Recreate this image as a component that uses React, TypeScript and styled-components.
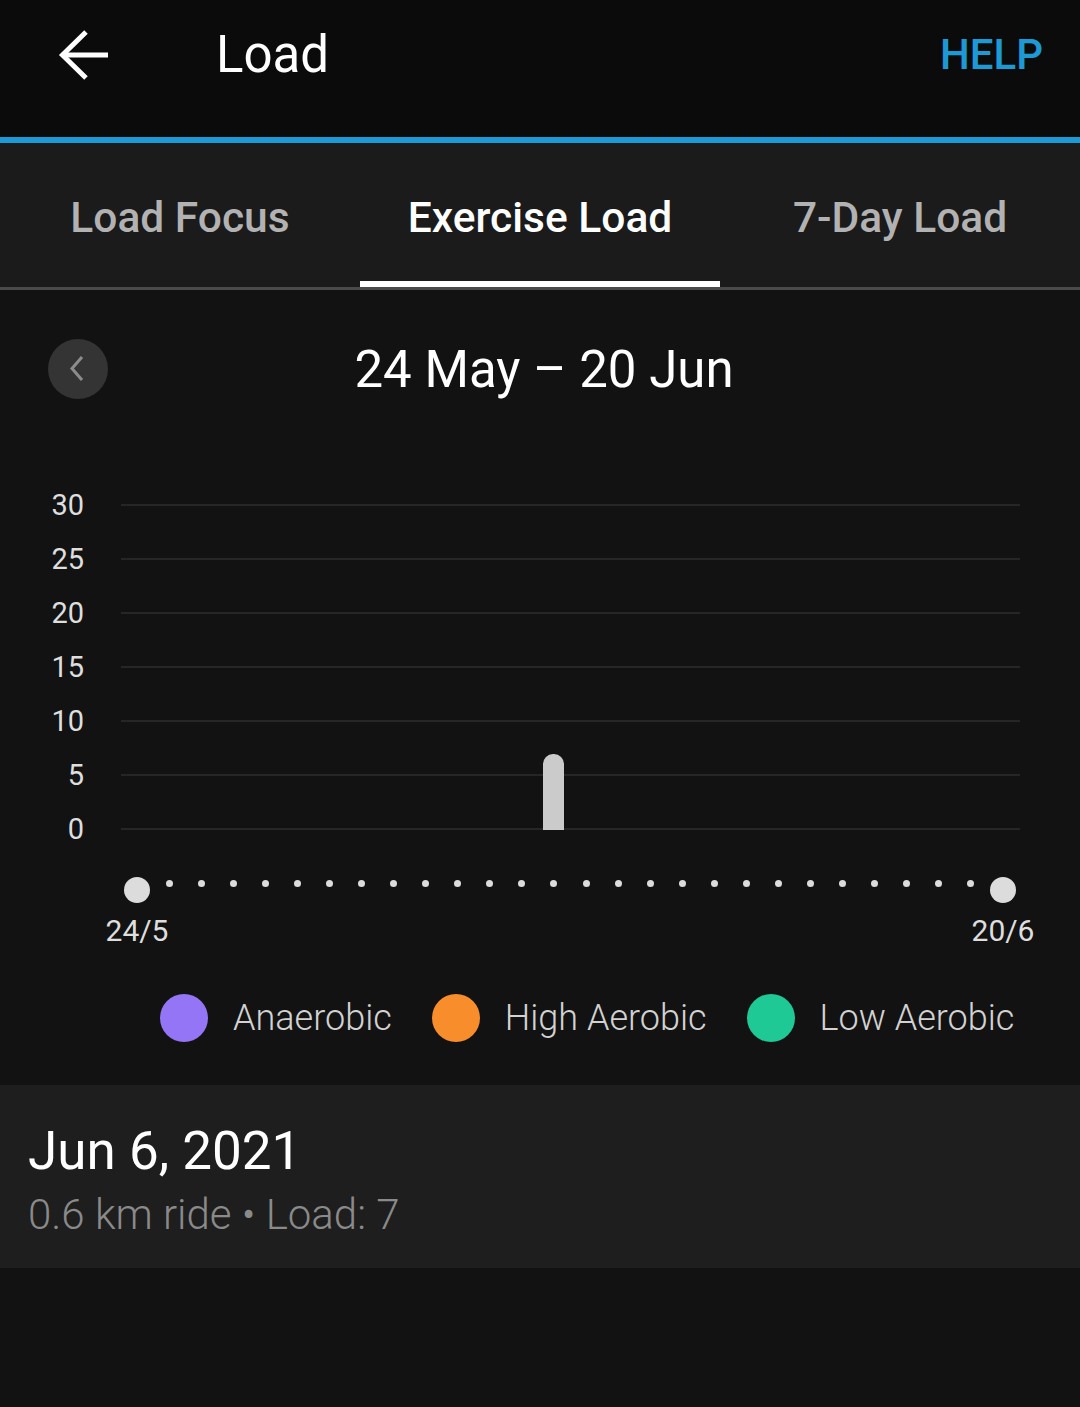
import styled, { createGlobalStyle } from "styled-components";

const GlobalStyle = createGlobalStyle`
  html, body {
    margin: 0;
    padding: 0;
    background: #121212;
  }
  body {
    font-family: Roboto, "Noto Sans", "Liberation Sans", sans-serif;
    -webkit-font-smoothing: antialiased;
  }
`;

const Page = styled.div`
  width: 1080px;
  min-height: 1407px;
  background: #121212;
  display: flex;
  flex-direction: column;
`;

const Header = styled.header`
  height: 143px;
  box-sizing: border-box;
  background: #0b0b0b;
  border-bottom: 6px solid #1d9ad6;
  display: flex;
  align-items: center;
  padding: 0 37px 28px 56px;
`;

const BackButton = styled.button`
  background: none;
  border: 0;
  padding: 0;
  width: 56px;
  height: 56px;
  display: flex;
  align-items: center;
  justify-content: center;
  cursor: pointer;
`;

const Title = styled.h1`
  margin: 0 0 0 104px;
  flex: 1;
  font-size: 51px;
  font-weight: 400;
  color: #ffffff;
`;

const HelpLink = styled.a`
  font-size: 42px;
  font-weight: 500;
  color: #1d9ad6;
  text-decoration: none;
`;

const Tabs = styled.nav`
  height: 147px;
  box-sizing: border-box;
  background: #1b1b1b;
  border-bottom: 3px solid #4a4a4a;
  display: grid;
  grid-template-columns: repeat(3, 1fr);
`;

const Tab = styled.div<{ $active?: boolean }>`
  display: flex;
  align-items: center;
  justify-content: center;
  font-size: 42.5px;
  font-weight: 500;
  color: ${(p) => (p.$active ? "#ffffff" : "#b2b2b2")};
  box-shadow: ${(p) => (p.$active ? "inset 0 -6px 0 #ffffff" : "none")};
  padding-top: 4px;
`;

const Content = styled.section`
  padding: 49px 0 43px;
`;

const RangeRow = styled.div`
  display: grid;
  grid-template-columns: 1fr auto 1fr;
  align-items: center;
  padding: 0 48px;
`;

const PrevButton = styled.button`
  width: 60px;
  height: 60px;
  border-radius: 50%;
  border: 0;
  background: #343434;
  display: flex;
  align-items: center;
  justify-content: center;
  padding: 0;
`;

const RangeTitle = styled.h2`
  margin: 0;
  padding-left: 8px;
  font-size: 51px;
  font-weight: 400;
  color: #ffffff;
`;

const Plot = styled.div`
  position: relative;
  margin-top: 79px;
`;

const GridRow = styled.div`
  height: 54px;
  display: flex;
  align-items: center;
  gap: 37px;
  padding-right: 60px;
`;

const AxisLabel = styled.span`
  width: 84px;
  text-align: right;
  font-size: 29px;
  color: #dedede;
`;

const GridLine = styled.div`
  flex: 1;
  height: 2px;
  background: #262626;
`;

const Bar = styled.div`
  position: absolute;
  width: 21px;
  bottom: 26px;
  background: #cbcbcb;
  border-radius: 10px 10px 0 0;
`;

const Timeline = styled.div`
  margin: 21px 0 0 121px;
  width: 898px;
  display: grid;
  grid-template-columns: repeat(28, 1fr);
  align-items: start;
`;

const Dot = styled.span<{ $big?: boolean }>`
  justify-self: center;
  width: ${(p) => (p.$big ? 26 : 7)}px;
  height: ${(p) => (p.$big ? 26 : 7)}px;
  margin-top: ${(p) => (p.$big ? 0 : 3)}px;
  border-radius: 50%;
  background: #dcdcdc;
`;

const DateLabels = styled.div`
  margin: 10px 0 0 121px;
  width: 898px;
  display: flex;
  justify-content: space-between;
`;

const DateLabel = styled.span`
  width: 32px;
  display: flex;
  justify-content: center;
  white-space: nowrap;
  font-size: 30px;
  color: #dedede;
`;

const Legend = styled.div`
  margin-top: 46px;
  padding-left: 160px;
  display: flex;
  align-items: center;
`;

const LegendItem = styled.div`
  display: flex;
  align-items: center;
  gap: 25px;
  margin-right: 40px;
  font-size: 36px;
  font-weight: 300;
  color: #d2d2d2;
`;

const Swatch = styled.span<{ $color: string }>`
  width: 48px;
  height: 48px;
  border-radius: 50%;
  background: ${(p) => p.$color};
`;

const ActivityCard = styled.div`
  height: 183px;
  box-sizing: border-box;
  background: #1e1e1e;
  padding: 34px 28px 0;
`;

const ActivityDate = styled.div`
  font-size: 53px;
  font-weight: 400;
  color: #ffffff;
  line-height: 64px;
`;

const ActivityMeta = styled.div`
  font-size: 42px;
  font-weight: 300;
  color: #8a8a8a;
  line-height: 64px;
`;

const yTicks = [30, 25, 20, 15, 10, 5, 0];
const days = 28;
const colWidth = 898 / days;
const loads: { day: number; value: number }[] = [{ day: 13, value: 7 }];

const legend = [
  { label: "Anaerobic", color: "#9475f5" },
  { label: "High Aerobic", color: "#f78d2b" },
  { label: "Low Aerobic", color: "#1fc995" },
];

export default function App() {
  return (
    <Page>
      <GlobalStyle />
      <Header>
        <BackButton aria-label="Back">
          <svg width="52" height="52" viewBox="0 0 52 52" fill="none">
            <path d="M4 26H50" stroke="#fff" strokeWidth="5" />
            <path d="M28 3L4.5 26L28 49" stroke="#fff" strokeWidth="5" />
          </svg>
        </BackButton>
        <Title>Load</Title>
        <HelpLink href="#help">HELP</HelpLink>
      </Header>

      <Tabs>
        <Tab>Load Focus</Tab>
        <Tab $active>Exercise Load</Tab>
        <Tab>7-Day Load</Tab>
      </Tabs>

      <Content>
        <RangeRow>
          <PrevButton aria-label="Previous">
            <svg width="20" height="30" viewBox="0 0 20 30" fill="none">
              <path d="M14 3L4 14.5L14 26" stroke="#8c8c8c" strokeWidth="3" />
            </svg>
          </PrevButton>
          <RangeTitle>24 May – 20 Jun</RangeTitle>
          <span />
        </RangeRow>

        <Plot>
          {yTicks.map((t) => (
            <GridRow key={t}>
              <AxisLabel>{t}</AxisLabel>
              <GridLine />
            </GridRow>
          ))}
          {loads.map((l) => (
            <Bar
              key={l.day}
              style={{
                left: 121 + (l.day + 0.5) * colWidth - 10.5,
                height: (l.value * 54) / 5,
              }}
            />
          ))}
        </Plot>

        <Timeline>
          {Array.from({ length: days }, (_, i) => (
            <Dot key={i} $big={i === 0 || i === days - 1} />
          ))}
        </Timeline>
        <DateLabels>
          <DateLabel>24/5</DateLabel>
          <DateLabel>20/6</DateLabel>
        </DateLabels>

        <Legend>
          {legend.map((l) => (
            <LegendItem key={l.label}>
              <Swatch $color={l.color} />
              {l.label}
            </LegendItem>
          ))}
        </Legend>
      </Content>

      <ActivityCard>
        <ActivityDate>Jun 6, 2021</ActivityDate>
        <ActivityMeta>0.6 km ride • Load: 7</ActivityMeta>
      </ActivityCard>
    </Page>
  );
}
